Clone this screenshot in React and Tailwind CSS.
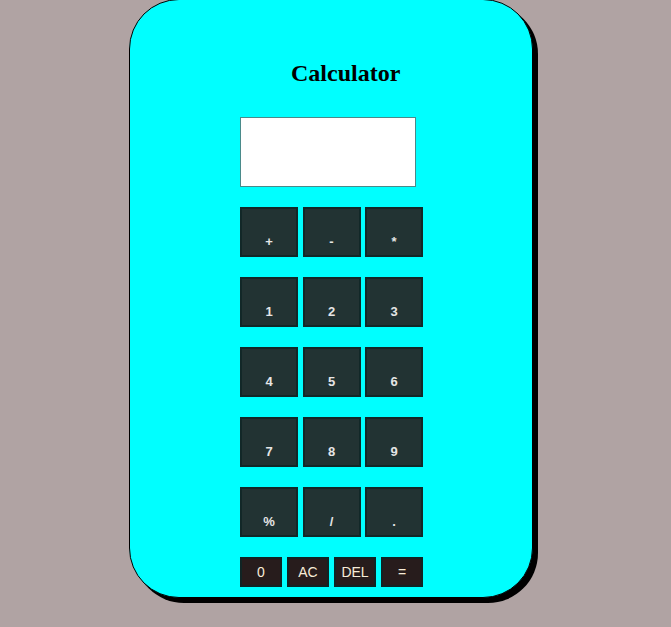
import React from "react";

const rows = [
  ["+", "-", "*"],
  ["1", "2", "3"],
  ["4", "5", "6"],
  ["7", "8", "9"],
  ["%", "/", "."],
];

const App = () => {
  return (
    <div className="min-h-[627px] w-full overflow-hidden bg-[#b0a3a3] font-['Liberation_Sans',Arial,sans-serif]">
      <div className="-mt-px ml-[129px] h-[599px] w-[404px] rounded-[50px] border border-black bg-[#00ffff] shadow-[5px_5px_0_0_#000]">
        {/* title */}
        <h1 className="pt-[58px] pl-[161px] font-['Liberation_Serif',serif] text-[24px] font-bold leading-[30px] text-black">
          Calculator
        </h1>

        <div className="ml-[110px] mt-[29px]">
          {/* display */}
          <div className="h-[70px] w-[176px] border border-[#4a8a8a] bg-white" />

          {/* keypad */}
          <div className="mt-[20px] flex flex-col gap-[20px]">
            {rows.map((row, i) => (
              <div key={i} className="flex gap-[4.5px]">
                {row.map((k) => (
                  <button
                    key={k}
                    className="flex h-[50px] w-[58px] items-end justify-center border-2 border-[#122828] bg-[#223333] pb-[4px] text-[13px] font-bold text-[#e6e6e6]"
                  >
                    {k}
                  </button>
                ))}
              </div>
            ))}
          </div>

          {/* bottom row */}
          <div className="mt-[20px] flex gap-[5px]">
            {["0", "AC", "DEL", "="].map((k) => (
              <button
                key={k}
                className="flex h-[30px] w-[42px] items-center justify-center border-2 border-[#102424] bg-[#271c1c] text-[14px] text-[#f7ecd8]"
              >
                {k}
              </button>
            ))}
          </div>
        </div>
      </div>
    </div>
  );
};

export default App;
